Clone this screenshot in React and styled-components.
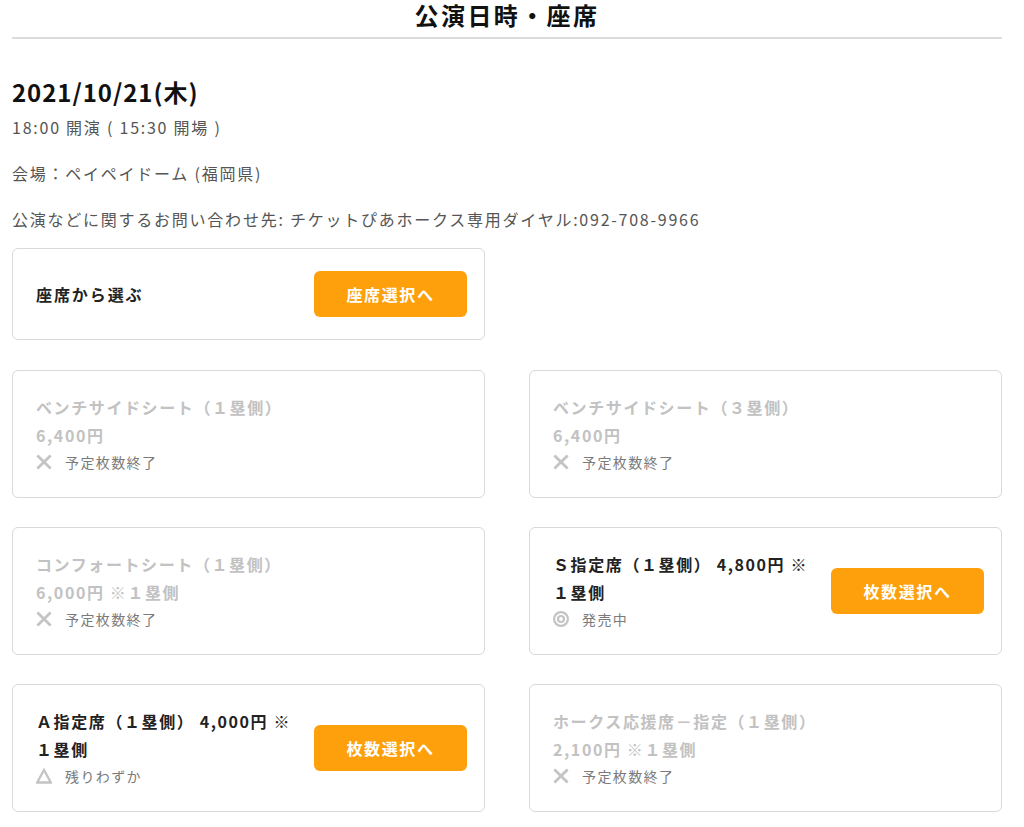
import React from 'react';
import styled, { createGlobalStyle } from 'styled-components';

const GlobalStyle = createGlobalStyle`
  body {
    margin: 0;
    background: #fff;
    font-family: "Noto Sans CJK JP", "Noto Sans", sans-serif;
    color: #222;
  }
`;

const Page = styled.div`
  padding: 0 22px 40px 12px;
`;

const Header = styled.h1`
  margin: 0;
  padding-top: 1px;
  padding-bottom: 9px;
  border-bottom: 2px solid #dcdcdc;
  font-size: 24px;
  line-height: 27px;
  font-weight: 700;
  letter-spacing: 0.1em;
  text-align: center;
  color: #111;
`;

const DateTitle = styled.h2`
  margin: 36px 0 0;
  font-size: 24px;
  line-height: 34px;
  font-weight: 700;
  letter-spacing: 0.04em;
  color: #111;
`;

const Info = styled.p`
  margin: ${(p) => (p.$first ? '6px' : '22px')} 0 0;
  font-size: 16px;
  line-height: 24px;
  letter-spacing: 0.11em;
  color: #555;
`;

const Card = styled.div`
  box-sizing: border-box;
  width: 473px;
  display: flex;
  align-items: center;
  justify-content: space-between;
  padding: 22px 17px 22px 23px;
  border: 1px solid #d9d9d9;
  border-radius: 6px;
  background: #fff;
`;

const SelectCard = styled(Card)`
  margin-top: 17px;
`;

const Label = styled.div`
  font-size: 16px;
  font-weight: 700;
  letter-spacing: 0.12em;
  color: #222;
`;

const OrangeButton = styled.button`
  flex-shrink: 0;
  width: 153px;
  height: 46px;
  margin-left: 18px;
  border: none;
  border-radius: 6px;
  background: #fe9f0c;
  color: #fff;
  font-family: inherit;
  font-size: 16px;
  font-weight: 700;
  letter-spacing: 0.1em;
  cursor: pointer;
`;

const Grid = styled.div`
  display: grid;
  grid-template-columns: 473px 473px;
  column-gap: 44px;
  row-gap: 29px;
  margin-top: 30px;
`;

const SeatInfo = styled.div`
  flex: 1;
  min-width: 0;
`;

const SeatLine = styled.div`
  font-size: 16px;
  line-height: 28px;
  font-weight: 700;
  letter-spacing: 0.1em;
  color: ${(p) => (p.$disabled ? '#c2c2c2' : '#222')};
`;

const Status = styled.div`
  display: flex;
  align-items: center;
  gap: 13px;
  height: 26px;
  font-size: 14px;
  letter-spacing: 0.1em;
  color: #7a7a7a;

  svg {
    flex-shrink: 0;
  }
`;

const ICON = '#c4c4c4';

const StatusIcon = ({ type }) => {
  if (type === 'open') {
    return (
      <svg width="16" height="16" viewBox="0 0 16 16">
        <circle cx="8" cy="8" r="6.9" fill="none" stroke={ICON} strokeWidth="2.2" />
        <circle cx="8" cy="8" r="3" fill="none" stroke={ICON} strokeWidth="2.2" />
      </svg>
    );
  }
  if (type === 'few') {
    return (
      <svg width="16" height="16" viewBox="0 0 16 16">
        <path d="M8 2 L14.8 14.5 L1.2 14.5 Z" fill="none" stroke={ICON} strokeWidth="2.3" />
      </svg>
    );
  }
  return (
    <svg width="16" height="16" viewBox="0 0 16 16">
      <path d="M1.4 1.4 L14.6 14.6 M14.6 1.4 L1.4 14.6" stroke={ICON} strokeWidth="2.8" />
    </svg>
  );
};

const statusText = { closed: '予定枚数終了', open: '発売中', few: '残りわずか' };

const seats = [
  { name: 'ベンチサイドシート（１塁側）', price: '6,400円', status: 'closed' },
  { name: 'ベンチサイドシート（３塁側）', price: '6,400円', status: 'closed' },
  { name: 'コンフォートシート（１塁側）', price: '6,000円 ※１塁側', status: 'closed' },
  { name: 'Ｓ指定席（１塁側）', price: '4,800円 ※１塁側', status: 'open' },
  { name: 'Ａ指定席（１塁側）', price: '4,000円 ※１塁側', status: 'few' },
  { name: 'ホークス応援席－指定（１塁側）', price: '2,100円 ※１塁側', status: 'closed' },
];

function SeatCard({ seat }) {
  const disabled = seat.status === 'closed';
  return (
    <Card>
      <SeatInfo>
        {disabled ? (
          <>
            <SeatLine $disabled>{seat.name}</SeatLine>
            <SeatLine $disabled>{seat.price}</SeatLine>
          </>
        ) : (
          <SeatLine>
            {seat.name} {seat.price}
          </SeatLine>
        )}
        <Status>
          <StatusIcon type={seat.status} />
          <span>{statusText[seat.status]}</span>
        </Status>
      </SeatInfo>
      {!disabled && <OrangeButton>枚数選択へ</OrangeButton>}
    </Card>
  );
}

function App() {
  return (
    <Page>
      <GlobalStyle />
      <Header>公演日時・座席</Header>
      <DateTitle>2021/10/21(木)</DateTitle>
      <Info $first>18:00 開演 ( 15:30 開場 )</Info>
      <Info>会場：ペイペイドーム (福岡県)</Info>
      <Info>公演などに関するお問い合わせ先: チケットぴあホークス専用ダイヤル:092-708-9966</Info>
      <SelectCard>
        <Label>座席から選ぶ</Label>
        <OrangeButton>座席選択へ</OrangeButton>
      </SelectCard>
      <Grid>
        {seats.map((seat) => (
          <SeatCard key={seat.name} seat={seat} />
        ))}
      </Grid>
    </Page>
  );
}

export default App;
